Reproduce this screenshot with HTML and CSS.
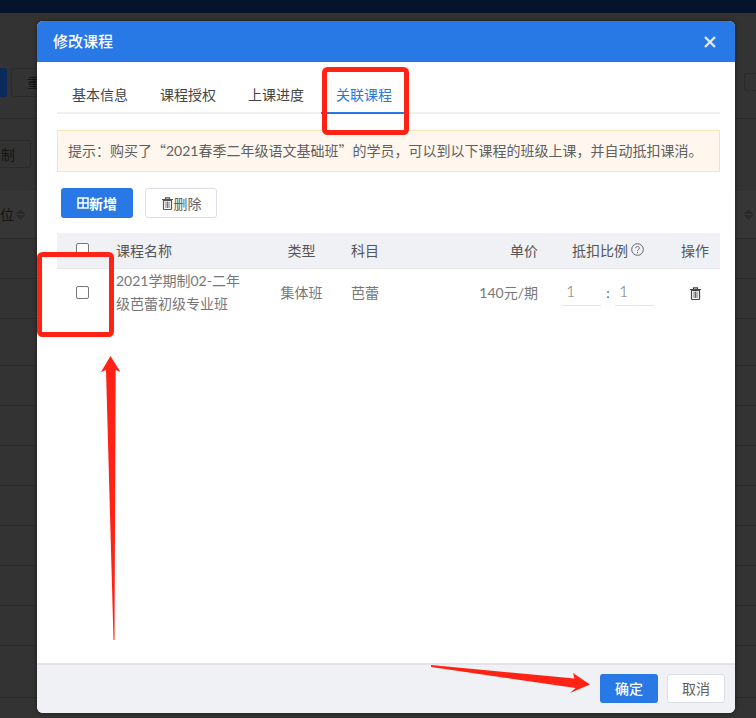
FILE: index.html
```html
<!DOCTYPE html>
<html lang="zh-CN">
<head>
<meta charset="utf-8">
<title>修改课程</title>
<link rel="stylesheet" href="styles.css">
</head>
<body>
<svg class="defs" width="0" height="0" aria-hidden="true">
  <symbol id="trash" viewBox="0 0 13 13">
    <path d="M4.5 2V.9h4V2M1 2.5h11" fill="none" stroke="currentColor" stroke-width="1.2"/>
    <path d="M2.5 3.5v8.2c0 .5.3.8.8.8h6.4c.5 0 .8-.3.8-.8V3.5z" fill="none" stroke="currentColor" stroke-width="1.2"/>
    <path d="M5 4.5v6.5M6.500 4.500v6.500M8 4.500v6.500" fill="none" stroke="currentColor" stroke-width=".8"/>
  </symbol>
</svg>
<div class="page">
  <div class="bg-top"></div>
  <div class="bg-toolbar">
    <div class="bg-group"><span class="bg-primary"></span><span class="bg-btn">重</span></div>
    <span class="bg-input"></span>
  </div>
  <div class="bg-filter"><span class="bg-select">制</span></div>
  <div class="bg-head">
    <span class="bg-col">位<i class="sort"></i></span>
    <i class="sort"></i>
  </div>
  <div class="bg-row"></div>
  <div class="bg-row"></div>
  <div class="bg-row bg-row-tall"></div>
  <div class="bg-row"></div>
  <div class="bg-row"></div>
  <div class="bg-row"></div>
  <div class="bg-row"></div>
  <div class="bg-row"></div>
  <div class="bg-row"></div>
  <div class="bg-row"></div>
  <div class="bg-row bg-row-last"></div>
</div>

<div class="modal">
  <header class="modal-head">
    <h1 class="modal-title">修改课程</h1>
    <svg class="close" width="12" height="12" viewBox="0 0 12 12" aria-label="关闭"><path d="M1 1l10 10M11 1L1 11" stroke="currentColor" stroke-width="2.400" fill="none"/></svg>
  </header>
  <div class="modal-body">
    <nav class="tabs">
      <span class="tab">基本信息</span>
      <span class="tab">课程授权</span>
      <span class="tab">上课进度</span>
      <span class="tab active">关联课程</span>
    </nav>
    <div class="alert">提示：购买了“<span class="latin">2021</span>春季二年级语文基础班”的学员，可以到以下课程的班级上课，并自动抵扣课消。</div>
    <div class="actions">
      <button class="btn btn-primary btn-add">
        <svg width="12" height="12" viewBox="0 0 12 12"><path d="M1 1h10v10H1zM6 1v10M1 6h10" fill="none" stroke="currentColor" stroke-width="1.500"/></svg>新增
      </button>
      <button class="btn btn-plain btn-del">
        <svg width="13" height="13"><use href="#trash"/></svg>删除
      </button>
    </div>
    <div class="table">
      <div class="tr thead">
        <span class="cell cell-check"><i class="check"></i></span>
        <span class="cell">课程名称</span>
        <span class="cell cell-center">类型</span>
        <span class="cell">科目</span>
        <span class="cell cell-right">单价</span>
        <span class="cell cell-ratio">抵扣比例
          <svg class="help" width="13" height="13" viewBox="0 0 13 13"><circle cx="6.500" cy="6.500" r="5.800" fill="none" stroke="currentColor"/><path d="M4.700 5.200c0-2.300 3.700-2.300 3.700-.1 0 1.400-1.900 1.400-1.900 3M6.500 9.200v1" fill="none" stroke="currentColor"/></svg>
        </span>
        <span class="cell cell-center">操作</span>
      </div>
      <div class="tr tbody">
        <span class="cell cell-check"><i class="check"></i></span>
        <span class="cell cell-name">2021学期制02-二年级芭蕾初级专业班</span>
        <span class="cell cell-center">集体班</span>
        <span class="cell">芭蕾</span>
        <span class="cell cell-right">140元/期</span>
        <span class="cell cell-inputs"><span class="num">1</span><span class="colon">:</span><span class="num">1</span></span>
        <span class="cell cell-center"><svg class="row-trash" width="13" height="13"><use href="#trash"/></svg></span>
      </div>
    </div>
  </div>
  <footer class="modal-foot">
    <button class="btn btn-primary btn-foot">确定</button>
    <button class="btn btn-plain btn-foot">取消</button>
  </footer>
</div>

<svg class="marks" width="756" height="718" viewBox="0 0 756 718" aria-hidden="true">
  <rect x="324.500" y="69.500" width="82" height="63" rx="3" class="mark-box"/>
  <rect x="39.500" y="254.500" width="72" height="80" rx="3" class="mark-box"/>
  <polygon points="110.500,356 120.500,372 115.700,370 114.500,640 113.500,640 106,370 101,372" class="mark-arrow"/>
  <polygon points="431,665 574.500,678.500 573,673 590,684.500 570,693 575.500,688 431,667" class="mark-arrow"/>
</svg>
</body>
</html>
```

FILE: styles.css
```css
* { box-sizing: border-box; }
html, body { margin: 0; padding: 0; height: 718px; overflow: hidden; }
body {
  position: relative;
  width: 756px;
  background: #333;
  font-family: "Noto Sans CJK SC", "Liberation Sans", sans-serif;
  font-size: 14px;
  color: #333;
}
.defs { position: absolute; }
.latin { font-family: Lato, "Noto Sans CJK SC", sans-serif; }

/* dimmed page behind the dialog */
.page { height: 718px; overflow: hidden; color: #141414; }
.bg-top { height: 13px; background: #05142a; }
.bg-toolbar {
  height: 106px;
  padding-top: 55px;
  display: flex;
  justify-content: space-between;
  align-items: flex-start;
  border-bottom: 1px solid #2b2b2b;
}
.bg-group { display: flex; gap: 4px; }
.bg-primary { width: 7px; height: 29px; background: #0b2a59; border-radius: 0 3px 3px 0; }
.bg-btn { width: 60px; height: 29px; padding-left: 15px; line-height: 26px; border: 1px solid #2b2b2b; border-radius: 3px; }
.bg-input { width: 12px; height: 18px; margin-top: 5px; border: 1px solid #2b2b2b; border-right: 0; border-radius: 3px 0 0 3px; }
.bg-filter { height: 70px; padding-top: 21px; }
.bg-select {
  display: block;
  width: 31px;
  height: 28px;
  line-height: 26px;
  padding-left: 1px;
  text-align: left;
  border: 1px solid #2b2b2b;
  border-left: 0;
  border-radius: 0 3px 3px 0;
}
.bg-head {
  height: 50px;
  display: flex;
  justify-content: space-between;
  align-items: center;
  padding-right: 3px;
  background: #363636;
  border-top: 1px solid #2f2f2f;
  border-bottom: 1px solid #2b2b2b;
}
.bg-col { display: flex; align-items: center; gap: 2px; }
.sort { display: block; width: 9px; height: 11px; background:
  linear-gradient(to bottom right, transparent 50%, #292929 50%) 0 0 / 4.500px 5px no-repeat,
  linear-gradient(to bottom left, transparent 50%, #292929 50%) 4.500px 0 / 4.500px 5px no-repeat,
  linear-gradient(to top right, transparent 50%, #292929 50%) 0 6px / 4.500px 5px no-repeat,
  linear-gradient(to top left, transparent 50%, #292929 50%) 4.500px 6px / 4.500px 5px no-repeat; }
.bg-row { height: 40px; border-bottom: 1px solid #2b2b2b; }
.bg-row-tall { height: 47px; }
.bg-row-last { height: 52px; }

/* dialog */
.modal {
  position: absolute;
  left: 37px;
  top: 21px;
  width: 698px;
  height: 692px;
  display: flex;
  flex-direction: column;
  background: #fff;
  border-radius: 6px;
  overflow: hidden;
  box-shadow: 0 0 5px rgba(0, 0, 0, .45);
}
.modal-head {
  height: 41px;
  flex: none;
  display: flex;
  justify-content: space-between;
  align-items: center;
  padding: 0 19px 0 16px;
  background: #2878e6;
  color: #fff;
}
.modal-title { margin: 0; font-size: 15px; font-weight: 500; line-height: 39px; height: 41px; }
.close { color: #dfe9f9; }

.modal-body { flex: 1; padding: 14px 15px 0 20px; }
.tabs { display: flex; gap: 2px; border-bottom: 2px solid #eeeff2; }
.tab {
  width: 86px;
  height: 36px;
  padding-left: 15px;
  line-height: 36px;
  white-space: nowrap;
  color: #444;
}
.tab.active { color: #2878e6; position: relative; }
.tab.active::after {
  content: "";
  position: absolute;
  left: 0;
  right: 0;
  bottom: -2px;
  height: 2px;
  background: #2878e6;
}
.alert {
  height: 42px;
  margin-top: 16px;
  padding-left: 10px;
  line-height: 38px;
  white-space: nowrap;
  background: #fff7ee;
  border: 1px solid #fbe1bc;
  color: #606060;
}
.actions { display: flex; gap: 12px; margin: 16px 0 15px 4px; }
.btn {
  font: inherit;
  display: inline-flex;
  align-items: center;
  justify-content: center;
  padding: 0;
  border-radius: 3px;
}
.btn-primary { background: #2878e6; border: 0; color: #fff; }
.btn-plain { background: #fff; border: 1px solid #dcdfe6; color: #606060; }
.btn-add, .btn-del { width: 72px; height: 30px; }
.btn-add { font-weight: 700; }
.btn-del svg { color: #555; }

.tr { display: grid; grid-template-columns: 59px 136px 99px 79px 108px 132px 50px; align-items: center; }
.thead { height: 36px; background: #f0f1f5; border-bottom: 1px solid #e6e6ec; color: #555; }
.thead .cell { padding-bottom: 2px; }
.tbody { min-height: 46px; color: #777; font-family: Lato, "Noto Sans CJK SC", sans-serif; }
.cell { display: block; }
.cell-check { padding-left: 19px; }
.cell-center { text-align: center; }
.cell-right { text-align: right; }
.cell-ratio { display: flex; align-items: center; gap: 3px; padding-left: 34px; white-space: nowrap; }
.help { color: #666; }
.cell-name { line-height: 23px; padding-right: 6px; }
.check { display: block; width: 13px; height: 13px; background: #fff; border: 1px solid #777; border-radius: 2px; }
.cell-inputs { display: flex; align-items: center; padding-left: 24px; }
.num {
  width: 39px;
  height: 25px;
  margin-top: 3px;
  padding-left: 4px;
  line-height: 20px;
  font-size: 16px;
  font-weight: 300;
  border-bottom: 1px solid #e3e5ec;
  color: #777;
}
.colon { width: 14px; text-align: center; color: #666; }
.row-trash { display: block; margin: 2px auto 0; color: #444; }

.modal-foot {
  height: 50px;
  flex: none;
  display: flex;
  justify-content: flex-end;
  align-items: flex-start;
  gap: 9px;
  padding: 9px 10px 0 0;
  background: #f0f1f5;
  border-top: 2px solid #e3e3e8;
}
.btn-foot { width: 58px; height: 29px; padding-bottom: 1px; }
.btn-foot.btn-primary { font-weight: 500; }

/* red annotations drawn over the screenshot */
.marks { position: absolute; left: 0; top: 0; pointer-events: none; }
.mark-box { fill: none; stroke: #ff2316; stroke-width: 5; }
.mark-arrow { fill: #ff2316; }
```
